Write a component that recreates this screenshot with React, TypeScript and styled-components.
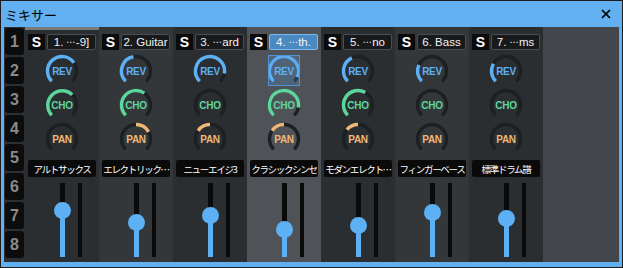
import styled, { createGlobalStyle } from "styled-components";

const GlobalStyle = createGlobalStyle`
  html, body {
    margin:0;
    padding:0;
    background:#ffffff;
    overflow:hidden;
  }
`;

const Window = styled.div`
  width:623px;
  height:268px;
  box-sizing:border-box;
  border:1px solid #1c1c1c;
  background:#62b0f0;
  display:flex;
  flex-direction:column;
  padding:0 3px 5px 3px;
`;

const TitleBar = styled.div`
  height:26px;
  flex:none;
  display:flex;
  align-items:center;
  justify-content:space-between;
  padding:0 8px 0 1px;
  font-family:"Noto Sans CJK JP", sans-serif;
  font-size:13px;
  color:#000;
`;

const Body = styled.div`
  flex:1;
  display:flex;
  background:#2b2f33;
`;

const NumberCol = styled.div`
  width:21px;
  box-sizing:border-box;
  padding:1px 1px 0 1px;
  display:flex;
  flex-direction:column;
  gap:2px;
`;

const NumberCell = styled.div`
  height:27px;
  background:#0c0c0c;
  border-radius:3px;
  color:#8a8a8a;
  font-family:"Liberation Sans", sans-serif;
  font-weight:bold;
  font-size:16px;
  display:flex;
  align-items:center;
  justify-content:center;
`;

const Strip = styled.div<{ $tone: "dark" | "light" | "selected" }>`
  width:74px;
  flex:none;
  display:flex;
  flex-direction:column;
  align-items:center;
  background:${(p) =>
    p.$tone === "selected" ? "#4f5357" : p.$tone === "light" ? "#33373a" : "#2a2e31"};
`;

const TopBar = styled.div<{ $on: boolean }>`
  height:3px;
  align-self:stretch;
  background:${(p) => (p.$on ? "#7a7a7a" : "transparent")};
`;

const Header = styled.div`
  margin-top:4px;
  align-self:flex-start;
  margin-left:3px;
  display:flex;
  gap:2px;
`;

const SoloButton = styled.div`
  width:17px;
  height:16px;
  background:#0b0b0b;
  color:#ffffff;
  font-family:"Liberation Sans", sans-serif;
  font-weight:bold;
  font-size:14px;
  display:flex;
  align-items:center;
  justify-content:center;
`;

const TitleBox = styled.div<{ $selected: boolean }>`
  width:49px;
  height:16px;
  box-sizing:border-box;
  border:1px solid ${(p) => (p.$selected ? "#7cb8ec" : "#4a4d51")};
  background:${(p) => (p.$selected ? "#4b89c2" : "#17191b")};
  color:#f2f2f2;
  border-radius:2px;
  font-family:"Liberation Sans", "DejaVu Sans", sans-serif;
  font-size:11.5px;
  white-space:nowrap;
  overflow:hidden;
  display:flex;
  align-items:center;
  justify-content:center;
`;

const Dots = styled.span`
  font-family:"DejaVu Sans", sans-serif;
  font-size:9px;
  letter-spacing:-0.5px;
  margin:0 1px 0 3px;
`;

const KnobStack = styled.div`
  margin-top:4px;
  display:flex;
  flex-direction:column;
`;

const KnobBox = styled.div<{ $focused?: boolean }>`
  width:34px;
  height:34px;
  display:grid;
  place-items:center;
  position:relative;
  ${(p) =>
    p.$focused &&
    `&::after {
      content:"";
      position:absolute;
      inset:1px 1px 2px 1px;
      border:1px solid #4d93d6;
      background:rgba(90,160,230,0.22);
    }`}

  & > * {
    grid-area:1 / 1;
  }
`;

const KnobLabel = styled.span<{ $color: string }>`
  color:${(p) => p.$color};
  font-family:"Liberation Sans", sans-serif;
  font-weight:bold;
  font-size:10px;
  letter-spacing:-0.3px;
  position:relative;
  z-index:1;
`;

const NameLabel = styled.div`
  margin-top:4px;
  width:68px;
  height:17px;
  background:#0a0a0a;
  border-radius:2px;
  color:#ffffff;
  font-family:"Noto Sans CJK JP", sans-serif;
  font-size:9.5px;
  letter-spacing:-1.3px;
  white-space:nowrap;
  overflow:hidden;
  display:flex;
  align-items:center;
  justify-content:center;
`;

const FaderRow = styled.div`
  margin-top:6px;
  height:74px;
  align-self:stretch;
  display:flex;
  padding-left:29px;
  gap:7px;
`;

const FaderSlot = styled.div`
  width:17px;
  position:relative;
`;

const FaderTrack = styled.div`
  position:absolute;
  left:6px;
  width:5px;
  top:0;
  bottom:0;
  background:#0a0a0a;
`;

const FaderFill = styled.div`
  position:absolute;
  left:6px;
  width:5px;
  bottom:0;
  background:#5eb0f4;
`;

const FaderThumb = styled.div`
  position:absolute;
  left:0;
  width:17px;
  height:17px;
  border-radius:50%;
  background:#5eb0f4;
`;

const Meter = styled.div`
  width:4px;
  background:#0a0a0a;
`;

const Empty = styled.div`
  flex:1;
  background:#43474b;
`;

const COLORS = {
  rev: "#5eb0f4",
  cho: "#5ed59c",
  pan: "#f0b878",
};

// title: number prefix, elided or not, tail
const channels = [
  { no: "1.", cut: true, tail: "-9]", name: "アルトサックス", rev: 55, cho: 45, pan: 0, fader: 27 },
  { no: "2.", cut: false, tail: "Guitar", name: "エレクトリック…", rev: -10, cho: 35, pan: 60, fader: 39 },
  { no: "3.", cut: true, tail: "ard", name: "ニューエイジ3", rev: 100, cho: -135, pan: -55, fader: 32 },
  { no: "4.", cut: true, tail: "th.", name: "クラシックシンセ", rev: 115, cho: 100, pan: -55, fader: 46 },
  { no: "5.", cut: true, tail: "no", name: "モダンエレクト…", rev: -25, cho: 30, pan: -50, fader: 42 },
  { no: "6.", cut: false, tail: "Bass", name: "フィンガーベース", rev: -65, cho: -135, pan: 0, fader: 29 },
  { no: "7.", cut: true, tail: "ms", name: "標準ドラム譜", rev: -60, cho: -135, pan: 0, fader: 35 },
];

function arc(a0: number, a1: number, r = 14.5, c = 17) {
  const pt = (a: number) => {
    const t = (a * Math.PI) / 180;
    return [c + r * Math.sin(t), c - r * Math.cos(t)];
  };
  const [x0, y0] = pt(a0);
  const [x1, y1] = pt(a1);
  const large = a1 - a0 > 180 ? 1 : 0;
  return `M ${x0.toFixed(2)} ${y0.toFixed(2)} A ${r} ${r} 0 ${large} 1 ${x1.toFixed(2)} ${y1.toFixed(2)}`;
}

function Knob(props: { label: string; color: string; from: number; to: number; focused?: boolean }) {
  const a0 = Math.min(props.from, props.to);
  const a1 = Math.max(props.from, props.to);
  return (
    <KnobBox $focused={props.focused}>
      <svg width="34" height="34" viewBox="0 0 34 34">
        <path d={arc(-135, 135)} fill="none" stroke="#1d2023" strokeWidth="3.5" />
        {a1 - a0 > 0.5 && (
          <path d={arc(a0, a1)} fill="none" stroke={props.color} strokeWidth="3.5" />
        )}
      </svg>
      <KnobLabel $color={props.color}>{props.label}</KnobLabel>
    </KnobBox>
  );
}

function App() {
  return (
    <>
      <GlobalStyle />
      <Window>
        <TitleBar>
          <span>ミキサー</span>
          <svg width="10" height="10" viewBox="0 0 10 10">
            <path d="M1 1 L9 9 M9 1 L1 9" stroke="#000" strokeWidth="1.7" />
          </svg>
        </TitleBar>
        <Body>
          <NumberCol>
            {[1, 2, 3, 4, 5, 6, 7, 8].map((n) => (
              <NumberCell key={n}>{n}</NumberCell>
            ))}
          </NumberCol>
          {channels.map((ch, i) => {
            const selected = i === 3;
            return (
              <Strip key={i} $tone={selected ? "selected" : i % 2 ? "light" : "dark"}>
                <TopBar $on={i === 0} />
                <Header>
                  <SoloButton>S</SoloButton>
                  <TitleBox $selected={selected}>
                    {ch.no}
                    {ch.cut ? <Dots>⋯</Dots> : " "}
                    {ch.tail}
                  </TitleBox>
                </Header>
                <KnobStack>
                  <Knob label="REV" color={COLORS.rev} from={-135} to={ch.rev} focused={selected} />
                  <Knob label="CHO" color={COLORS.cho} from={-135} to={ch.cho} />
                  <Knob label="PAN" color={COLORS.pan} from={0} to={ch.pan} />
                </KnobStack>
                <NameLabel>{ch.name}</NameLabel>
                <FaderRow>
                  <FaderSlot>
                    <FaderTrack />
                    <FaderFill style={{ top: ch.fader }} />
                    <FaderThumb style={{ top: ch.fader - 8.5 }} />
                  </FaderSlot>
                  <Meter />
                </FaderRow>
              </Strip>
            );
          })}
          <Empty />
        </Body>
      </Window>
    </>
  );
}

export default App;
